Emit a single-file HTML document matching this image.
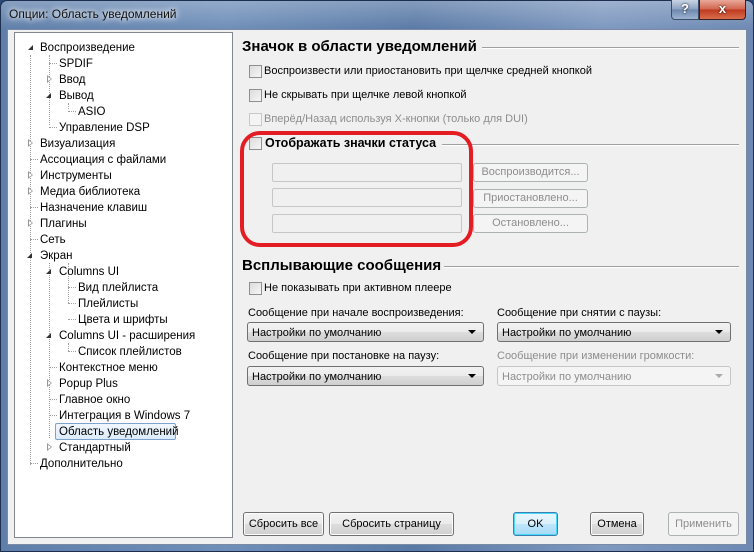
<!DOCTYPE html>
<html><head><meta charset="utf-8"><style>
*{box-sizing:border-box;margin:0;padding:0}
body{width:754px;height:552px;overflow:hidden;font-family:Tahoma,"Liberation Sans","DejaVu Sans",sans-serif;font-size:11px;line-height:17px;color:#000;position:relative;background:#2b4a78}
.frame{position:absolute;left:0;top:0;width:754px;height:552px;border-radius:7px 7px 0 0;background:linear-gradient(90deg,#5f7faa 0%,#6f8fb9 30%,#5a7aa6 55%,#7e98bf 80%,#6d89b3 100%);border:1px solid #1d2f4e}
.frame:after{content:"";position:absolute;left:0;top:0;width:752px;height:28px;background:linear-gradient(180deg,rgba(255,255,255,.25),rgba(255,255,255,0));border-radius:7px 7px 0 0}
.title{position:absolute;left:9px;top:6px;font-size:12px;color:#111;text-shadow:0 0 6px #fff,0 0 8px #fff}
.client{position:absolute;left:7px;top:29px;width:740px;height:516px;background:#f0f0f0;border:1px solid #7a8aa4}
.a{position:absolute;white-space:nowrap}
.tree{position:absolute;left:14px;top:32px;width:219px;height:506px;background:#fff;border:1px solid #828790}
.ti{position:absolute;white-space:nowrap;line-height:16px;height:16px;margin-top:1px;font-size:11.5px}
.exp{position:absolute;width:0;height:0}
.e{border-left:5px solid transparent;border-bottom:5px solid #333}
.c{border-top:4px solid transparent;border-bottom:4px solid transparent;border-left:5px solid #999}
.c:after{content:"";position:absolute;left:-4px;top:-2px;border-top:2px solid transparent;border-bottom:2px solid transparent;border-left:3px solid #fff}
.vl{position:absolute;border-left:1px dotted #a0a0a0;width:0}
.hl{position:absolute;border-top:1px dotted #a0a0a0;height:0}
.h{position:absolute;font-weight:bold;font-size:15px;line-height:22px;white-space:nowrap}
.line{position:absolute;height:1px;background:#a0a0a0;border-bottom:1px solid #fff;box-sizing:content-box}
.cb{position:absolute;width:13px;height:13px;border:1px solid #8e8f8f;background:linear-gradient(135deg,#dcdcdc,#f6f6f6)}
.cb.d{border-color:#c8c8c8;background:#f4f4f4}
.tb{position:absolute;border:1px solid #c6c6c6;background:#f0f0f0;border-radius:2px}
.btn{position:absolute;border:1px solid #707070;border-radius:3px;background:linear-gradient(#f2f2f2 0%,#ebebeb 50%,#dddddd 51%,#cfcfcf 100%);text-align:center;white-space:nowrap;box-shadow:inset 0 0 0 1px #fcfcfc}
.btn.d{border-color:#adb2b5;background:#f4f4f4;color:#8d8d8d;box-shadow:none}
.cmb{position:absolute;border:1px solid #707070;border-radius:3px;background:linear-gradient(#f2f2f2 0%,#ebebeb 50%,#dddddd 51%,#cfcfcf 100%);padding-left:4px;line-height:20px;white-space:nowrap}
.cmb:after{content:"";position:absolute;right:7px;top:7px;border-left:4px solid transparent;border-right:4px solid transparent;border-top:4px solid #000}
.cmb.d{border-color:#c6c6c6;background:#f4f4f4;color:#8d8d8d}
.cmb.d:after{border-top-color:#aaa}
.gray{color:#8d8d8d}
</style></head><body>
<div class="frame"></div>
<div class="title">Опции: Область уведомлений</div>
<div class="a" style="left:671px;top:0px;width:28px;height:20px;border:1px solid #3b4c66;border-top:none;border-radius:0 0 0 4px;background:linear-gradient(#c8d4e4,#8aa0bf 50%,#6d87ad 51%,#9cb3d2);color:#fff;font-weight:bold;font-size:13px;text-align:center;line-height:18px;text-shadow:0 0 2px #000">?</div>
<div class="a" style="left:699px;top:0px;width:47px;height:20px;border:1px solid #3b2020;border-top:none;border-radius:0 0 4px 0;background:linear-gradient(#e9a99a,#d0624b 50%,#c0391e 51%,#d86e4e);color:#fff;font-weight:bold;font-size:13px;text-align:center;line-height:18px;text-shadow:0 0 2px #000">x</div>
<div class="client"></div>

<div class="tree">
<div class="vl" style="left:15px;top:22px;height:410px"></div>
<div class="vl" style="left:34px;top:22px;height:70px"></div>
<div class="vl" style="left:53px;top:70px;height:6px"></div>
<div class="vl" style="left:34px;top:230px;height:175px"></div>
<div class="vl" style="left:53px;top:230px;height:40px"></div>
<div class="vl" style="left:53px;top:310px;height:8px"></div>
</div>
<div class="a" style="left:55px;top:423px;width:121px;height:17px;border:1px solid #7da2ce;border-radius:2px;background:linear-gradient(#f2f7fd,#dcebfc)"></div>

<div style="position:absolute;left:0;top:0">
<div class="ti" style="left:40px;top:39px">Воспроизведение</div><div class="exp e" style="left:28px;top:45px"></div>
<div class="hl" style="left:49px;top:63px;width:8px"></div><div class="ti" style="left:59px;top:55px">SPDIF</div>
<div class="exp c" style="left:47px;top:75px"></div><div class="ti" style="left:59px;top:71px">Ввод</div>
<div class="exp e" style="left:46px;top:93px"></div><div class="ti" style="left:59px;top:87px">Вывод</div>
<div class="hl" style="left:68px;top:111px;width:8px"></div><div class="ti" style="left:78px;top:103px">ASIO</div>
<div class="hl" style="left:49px;top:127px;width:8px"></div><div class="ti" style="left:59px;top:119px">Управление DSP</div>
<div class="exp c" style="left:28px;top:139px"></div><div class="ti" style="left:40px;top:135px">Визуализация</div>
<div class="hl" style="left:30px;top:159px;width:8px"></div><div class="ti" style="left:40px;top:151px">Ассоциация с файлами</div>
<div class="exp c" style="left:28px;top:171px"></div><div class="ti" style="left:40px;top:167px">Инструменты</div>
<div class="exp c" style="left:28px;top:187px"></div><div class="ti" style="left:40px;top:183px">Медиа библиотека</div>
<div class="hl" style="left:30px;top:207px;width:8px"></div><div class="ti" style="left:40px;top:199px">Назначение клавиш</div>
<div class="exp c" style="left:28px;top:219px"></div><div class="ti" style="left:40px;top:215px">Плагины</div>
<div class="hl" style="left:30px;top:239px;width:8px"></div><div class="ti" style="left:40px;top:231px">Сеть</div>
<div class="exp e" style="left:27px;top:253px"></div><div class="ti" style="left:40px;top:247px">Экран</div>
<div class="exp e" style="left:46px;top:269px"></div><div class="ti" style="left:59px;top:263px">Columns UI</div>
<div class="hl" style="left:68px;top:287px;width:8px"></div><div class="ti" style="left:78px;top:279px">Вид плейлиста</div>
<div class="hl" style="left:68px;top:303px;width:8px"></div><div class="ti" style="left:78px;top:295px">Плейлисты</div>
<div class="hl" style="left:68px;top:319px;width:8px"></div><div class="ti" style="left:78px;top:311px">Цвета и шрифты</div>
<div class="exp e" style="left:46px;top:333px"></div><div class="ti" style="left:59px;top:327px">Columns UI - расширения</div>
<div class="hl" style="left:68px;top:351px;width:8px"></div><div class="ti" style="left:78px;top:343px">Список плейлистов</div>
<div class="hl" style="left:49px;top:367px;width:8px"></div><div class="ti" style="left:59px;top:359px">Контекстное меню</div>
<div class="exp c" style="left:47px;top:379px"></div><div class="ti" style="left:59px;top:375px">Popup Plus</div>
<div class="hl" style="left:49px;top:399px;width:8px"></div><div class="ti" style="left:59px;top:391px">Главное окно</div>
<div class="hl" style="left:49px;top:415px;width:8px"></div><div class="ti" style="left:59px;top:407px">Интеграция в Windows 7</div>
<div class="ti" style="left:59px;top:423px">Область уведомлений</div>
<div class="exp c" style="left:47px;top:443px"></div><div class="ti" style="left:59px;top:439px">Стандартный</div>
<div class="hl" style="left:30px;top:463px;width:8px"></div><div class="ti" style="left:40px;top:455px">Дополнительно</div>
</div>

<div class="h" style="left:242px;top:36px">Значок в области уведомлений</div>
<div class="line" style="left:482px;top:47px;width:257px"></div>
<div class="cb" style="left:249px;top:65px"></div><div class="a" style="left:264px;top:63px">Воспроизвести или приостановить при щелчке средней кнопкой</div>
<div class="cb" style="left:249px;top:89px"></div><div class="a" style="left:264px;top:87px">Не скрывать при щелчке левой кнопкой</div>
<div class="cb d" style="left:249px;top:113px"></div><div class="a gray" style="left:264px;top:111px">Вперёд/Назад используя X-кнопки (только для DUI)</div>

<div class="cb" style="left:249px;top:137px"></div><div class="a" style="left:265px;top:135px;font-weight:bold;font-size:12.5px">Отображать значки статуса</div>
<div class="line" style="left:442px;top:144px;width:297px"></div>
<div class="tb" style="left:272px;top:163px;width:190px;height:19px"></div>
<div class="tb" style="left:272px;top:188px;width:190px;height:19px"></div>
<div class="tb" style="left:272px;top:214px;width:190px;height:19px"></div>
<div class="btn d" style="left:473px;top:163px;width:115px;height:19px;line-height:17px">Воспроизводится...</div>
<div class="btn d" style="left:473px;top:189px;width:115px;height:19px;line-height:17px">Приостановлено...</div>
<div class="btn d" style="left:473px;top:214px;width:115px;height:19px;line-height:17px">Остановлено...</div>
<div class="a" style="left:240px;top:131px;width:233px;height:116px;border:4px solid #e41c24;border-radius:20px"></div>

<div class="h" style="left:242px;top:255px">Всплывающие сообщения</div>
<div class="line" style="left:444px;top:266px;width:295px"></div>
<div class="cb" style="left:249px;top:282px"></div><div class="a" style="left:264px;top:280px">Не показывать при активном плеере</div>
<div class="a" style="left:248px;top:305px">Сообщение при начале воспроизведения:</div>
<div class="a" style="left:497px;top:305px">Сообщение при снятии с паузы:</div>
<div class="cmb" style="left:247px;top:322px;width:237px;height:20px">Настройки по умолчанию</div>
<div class="cmb" style="left:497px;top:322px;width:234px;height:20px">Настройки по умолчанию</div>
<div class="a" style="left:248px;top:348px">Сообщение при постановке на паузу:</div>
<div class="a gray" style="left:497px;top:348px">Сообщение при изменении громкости:</div>
<div class="cmb" style="left:247px;top:366px;width:237px;height:20px">Настройки по умолчанию</div>
<div class="cmb d" style="left:497px;top:366px;width:234px;height:20px">Настройки по умолчанию</div>

<div class="btn" style="left:243px;top:512px;width:81px;height:24px;line-height:22px">Сбросить все</div>
<div class="btn" style="left:329px;top:512px;width:125px;height:24px;line-height:22px">Сбросить страницу</div>
<div class="btn" style="left:513px;top:512px;width:45px;height:24px;line-height:22px;border-color:#3c7fb1;box-shadow:inset 0 0 0 1px #48d8fb;background:linear-gradient(#eaf6fd,#d9f0fc 50%,#bee6fd 51%,#a7d9f5)">OK</div>
<div class="btn" style="left:590px;top:512px;width:54px;height:24px;line-height:22px">Отмена</div>
<div class="btn d" style="left:668px;top:512px;width:71px;height:24px;line-height:22px">Применить</div>
</body></html>
